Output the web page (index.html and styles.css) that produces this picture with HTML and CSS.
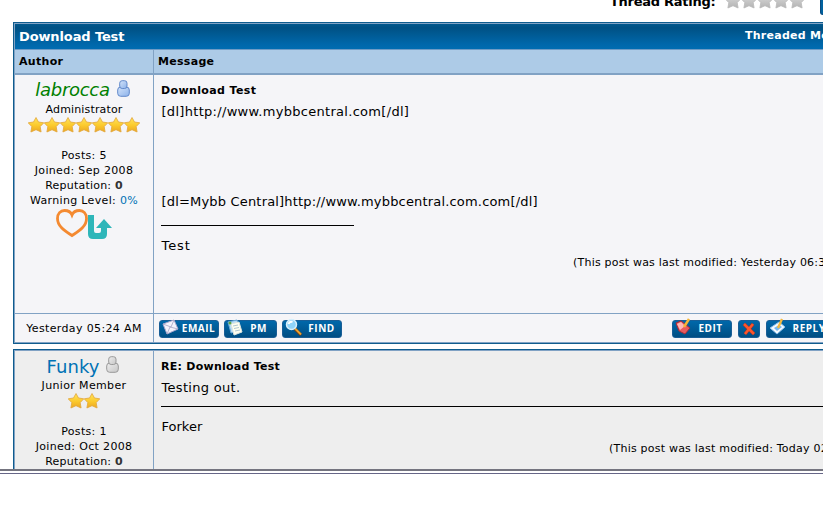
FILE: index.html
```html
<!DOCTYPE html>
<html lang="en">
<head>
<meta charset="utf-8">
<title>Download Test</title>
<link rel="stylesheet" href="styles.css">
</head>
<body>
<svg width="0" height="0" class="defs" aria-hidden="true">
  <defs>
    <linearGradient id="gold" x1="0" y1="0" x2="0" y2="1"><stop offset="0" stop-color="#ffe45c"/><stop offset=".55" stop-color="#fbc92c"/><stop offset="1" stop-color="#eaa722"/></linearGradient>
    <linearGradient id="silver" x1="0" y1="0" x2="0" y2="1"><stop offset="0" stop-color="#dedede"/><stop offset="1" stop-color="#b3b3b3"/></linearGradient>
    <linearGradient id="blue" x1="0" y1="0" x2="1" y2="1"><stop offset="0" stop-color="#d3e3fa"/><stop offset="1" stop-color="#8cb2ea"/></linearGradient>
    <linearGradient id="gray" x1="0" y1="0" x2="1" y2="1"><stop offset="0" stop-color="#eee"/><stop offset="1" stop-color="#c6c6c6"/></linearGradient>
    <symbol id="star" viewBox="0 0 16 16"><path d="M8 .5l2.500 4.500 5.300.8-3.600 3.800.9 5.400L8 12.700l-5.100 2.300.9-5.400L.2 5.800l5.300-.8z" stroke-width=".8" stroke-linejoin="round"/></symbol>
    <symbol id="buddy" viewBox="0 0 13 17"><rect x=".7" y="7" width="11.600" height="9.300" rx="3" stroke-width="1"/><rect x="2.700" y=".7" width="7.300" height="7.800" rx="2.500" stroke-width="1"/></symbol>
  </defs>
</svg>
<div class="page">
  <header class="rating">
    <strong>Thread Rating:</strong>
    <span class="stars off"><svg><use href="#star"/></svg><svg><use href="#star"/></svg><svg><use href="#star"/></svg><svg><use href="#star"/></svg><svg><use href="#star"/></svg></span>
    <span class="corner"></span>
  </header>

  <section class="board first">
    <div class="thead"><strong>Download Test</strong><strong class="mode">Threaded Mode</strong></div>
    <div class="row tcat"><div class="cell"><b>Author</b></div><div class="cell"><b>Message</b></div></div>
    <div class="row post">
      <div class="author">
        <div class="name admin"><em>labrocca</em><svg class="buddy on"><use href="#buddy"/></svg></div>
        <div class="line rank">Administrator</div>
        <div class="stars"><svg><use href="#star"/></svg><svg><use href="#star"/></svg><svg><use href="#star"/></svg><svg><use href="#star"/></svg><svg><use href="#star"/></svg><svg><use href="#star"/></svg><svg><use href="#star"/></svg></div>
        <div class="stats">
          <div class="line">Posts: 5</div><div class="line">Joined: Sep 2008</div><div class="line rep">Reputation: <b>0</b></div><div class="line">Warning Level: <a>0%</a></div>
        </div>
        <div class="awards">
          <svg class="heart" viewBox="0 0 32 29"><path d="M16 26.500C10 22.500 1.500 18 1.500 9.500 1.500 4.500 4.500 1.500 8.500 1.500c4 0 6.500 2 7.500 4.500 1-2.500 3.500-4.500 7.500-4.500 4 0 7 3 7 8C30.500 18 22 22.500 16 26.500z"/></svg>
          <svg class="arrow" viewBox="0 0 24 24"><path d="M0 0h6v16q0 2 2 2h3q2 0 2-2v-3H8l8-9 8 9h-5v6q0 5-5 5H5q-5 0-5-5z"/></svg>
        </div>
      </div>
      <div class="message">
        <b class="subject">Download Test</b>
        <p class="text">[dl]http://www.mybbcentral.com[/dl]</p>
        <p class="text second">[dl=Mybb Central]http://www.mybbcentral.com.com[/dl]</p>
        <div class="rule short"></div>
        <p class="text sig test">Test</p>
        <div class="modified">(This post was last modified: Yesterday 06:33 AM</div>
      </div>
    </div>
    <div class="row actions">
      <div class="date">Yesterday 05:24 AM</div>
      <div class="tools">
        <span class="btn email"><svg viewBox="0 0 18 18"><path d="M2 5l11-4 4 9-11 5z" fill="#f4f2fb" stroke="#a9a6cd"/><path d="M2 5l8 3 3-7M6 15l3-7 8 2" fill="none" stroke="#a5a3c4" stroke-width=".8"/></svg><i>EMAIL</i></span>
        <span class="btn pm"><svg viewBox="0 0 18 18"><path d="M2 3l9-2 3 10-9 3z" fill="#b7dbf6" stroke="#6baad9"/><path d="M5 5l8-2 3 10-8 3z" fill="#fffef0" stroke="#dfe6e0"/><path d="M7 7l5-1M8 9.500l5-1M9 12l5-1" stroke="#9db9c9" stroke-width=".8"/><circle cx="4" cy="4" r="1.500" fill="#5da442"/></svg><i>PM</i></span>
        <span class="btn find"><svg viewBox="0 0 18 18"><path d="M11 10l6 6" stroke="#713c12" stroke-width="3"/><path d="M11 9.500l6 6" stroke="#eaa233" stroke-width="2"/><circle cx="7.500" cy="5.500" r="5" fill="#8fd4f9" stroke="#d5effc" stroke-width="1.500"/><path d="M4.500 5q1-3 4-2" fill="none" stroke="#fff" stroke-width="2"/></svg><i>FIND</i></span>
        <span class="btn edit"><svg viewBox="0 0 18 18"><path d="M2 4l5-2 9 7-5 6-6-3z" fill="#e85b5e" stroke="#a82b37"/><path d="M3 5l4-2 4 4-5 4z" fill="#ffb7b7"/><path d="M10 8l5-8" stroke="#f6b534" stroke-width="2.500"/></svg><i>EDIT</i></span>
        <span class="btn del"><svg viewBox="0 0 12 12"><path d="M1 1l10 10M10 1L2 11" stroke="#98302a" stroke-width="3.500"/><path d="M1 1l10 10M10 1L2 11" stroke="#fb562c" stroke-width="2.500"/></svg></span>
        <span class="btn reply"><svg viewBox="0 0 18 18"><path d="M2 9l9-6 6 5-8 7z" fill="#f4faff" stroke="#88bce9"/><path d="M6 9l5-3 3 2-5 4z" fill="#77b8f2"/><path d="M10 9l4-9" stroke="#f3b93f" stroke-width="2.300"/></svg><i>REPLY</i></span>
      </div>
    </div>
  </section>

  <section class="board next">
    <div class="row post">
      <div class="author">
        <div class="name member"><span>Funky</span><svg class="buddy idle"><use href="#buddy"/></svg></div>
        <div class="line rank junior">Junior Member</div>
        <div class="stars"><svg><use href="#star"/></svg><svg><use href="#star"/></svg></div>
        <div class="stats"><div class="line">Posts: 1</div><div class="line">Joined: Oct 2008</div><div class="line rep">Reputation: <b>0</b></div></div>
      </div>
      <div class="message">
        <b class="subject">RE: Download Test</b>
        <p class="text">Testing out.</p>
        <div class="rule"></div>
        <p class="text sig">Forker</p>
        <div class="modified">(This post was last modified: Today 02:10 AM</div>
      </div>
    </div>
  </section>
</div>
<div class="edge"></div>
</body>
</html>
```

FILE: styles.css
```css
* { box-sizing: border-box; }
body { margin: 0; height: 513px; overflow: hidden; background: #fff; color: #000; font: 11px/15px "DejaVu Sans", Verdana, sans-serif; }
.defs { position: absolute; }
p { margin: 0; }
.page { height: 469px; overflow: hidden; }
.rating { height: 22px; display: flex; align-items: flex-start; padding-left: 610px; overflow: hidden; }
.rating strong { width: 115px; flex: none; font-size: 13px; line-height: 16px; margin-top: -6px; letter-spacing: -.27px; white-space: nowrap; }
.stars { display: flex; justify-content: center; height: 16px; }
.stars svg { width: 16px; height: 16px; flex: none; fill: url(#gold); stroke: #e2a63c; }
.stars.off { margin-top: -7px; }
.stars.off svg { fill: url(#silver); stroke: #b9b9b9; }
.corner { flex: none; width: 20px; height: 15px; margin-left: 15px; background: #00629f; border: 1px solid #084b80; border-top: 0; border-radius: 0 0 0 3px; }
.board { margin-left: 13px; width: 900px; border: 1px solid #0f5c8e; }
.first { height: 322px; }
.next { margin-top: 5px; height: 200px; }
.thead { height: 27px; display: flex; color: #fff; border-top: 1px solid #81a2c4; border-left: 1px solid #81a2c4; border-bottom: 1px solid #6f9bc5; background: linear-gradient(#02588d, #005184 15%, #0067aa 80%, #006cb1); line-height: 25px; padding-left: 4px; white-space: nowrap; }
.thead strong { width: 726px; font-size: 13px; letter-spacing: -.12px; }
.thead .mode { width: auto; font-size: 11px; letter-spacing: .25px; line-height: 24px; }
.row { display: grid; grid-template-columns: 138px 1fr; border-left: 1px solid #81a2c4; }
.row > * + * { border-left: 1px solid #81a2c4; }
.tcat { height: 25px; background: #adcbe7; border-bottom: 2px solid #81a2c4; line-height: 24px; letter-spacing: .3px; }
.cell { padding-left: 4px; }
.post { height: 238px; background: #f5f5f8; }
.author { text-align: center; }
.name { height: 27px; padding: 4px 3px 0 0; display: flex; justify-content: center; font-size: 18px; line-height: 22px; }
.name em { color: #008000; letter-spacing: -.3px; }
.name span { color: #0072b5; letter-spacing: .1px; }
.buddy { width: 13px; height: 17px; margin: 1px 0 0 7px; }
.member { line-height: 23px; }
.member .buddy { margin: 1px 0 0 6px; }
.on { fill: url(#blue); stroke: #6289ca; }
.idle { fill: url(#gray); stroke: #999; }
.line { height: 15px; white-space: nowrap; letter-spacing: .33px; }
.line.rank { letter-spacing: .15px; }
.line.rep { letter-spacing: .22px; }
.line.junior { letter-spacing: .35px; }
.stats { padding-top: 15px; }
.stats b { color: #333; }
.stats a { color: #0072b5; }
.awards { display: flex; justify-content: center; height: 35px; }
.heart { width: 32px; height: 29px; margin-top: 1px; fill: none; stroke: #f48a31; stroke-width: 2.8; }
.arrow { width: 24px; height: 24px; margin-top: 7px; fill: #2eb6b9; }
.message { padding: 8px 0 0 7px; white-space: nowrap; }
.subject { display: block; height: 15px; letter-spacing: .38px; }
.next .subject { letter-spacing: .26px; }
.text { font-size: 13px; line-height: 18px; margin-top: 5px; height: 18px; padding-left: .5px; letter-spacing: .3px; }
.second { margin-top: 72px; letter-spacing: .18px; }
.rule { height: 1px; background: #000; margin-top: 9px; }
.short { width: 193px; margin-top: 14px; }
.sig { margin-top: 11px; letter-spacing: 0; }
.test { letter-spacing: .9px; }
.modified { width: 696px; padding-left: 412px; letter-spacing: .22px; }
.actions { height: 30px; background: #f5f5f8; border-top: 1px solid #81a2c4; border-bottom: 1px solid #81a2c4; }
.date { text-align: center; line-height: 29px; letter-spacing: .36px; }
.tools { display: flex; padding: 6px 0 0 5px; }
.btn { flex: none; height: 18px; display: flex; align-items: flex-start; background: linear-gradient(#0068aa, #004e83); border: 1px solid #195e96; border-radius: 3px; color: #fff; }
.btn svg { width: 18px; height: 18px; margin: -2px 0 0 1px; flex: none; overflow: visible; fill: none; }
.btn i { flex: 1; text-align: center; font: bold 10px/15px "Open Sans", sans-serif; letter-spacing: .5px; }
.email { width: 60px; }
.pm { width: 53px; margin-left: 5px; }
.pm i { padding-right: 3px; }
.find { width: 60px; margin-left: 5px; }
.edit { width: 60px; margin-left: 330px; }
.edit i { padding-right: 2px; }
.del { width: 22px; margin-left: 6px; }
.del svg { width: 12px; height: 12px; margin: 2px 0 0 4px; }
.reply { width: 67px; margin-left: 6px; }
.next .post { border-top: 1px solid #81a2c4; background: #eee; }
.next .modified { padding-left: 448px; margin-top: 5px; }
.edge { height: 5px; border-top: 2px solid #74747f; border-bottom: 1px solid #666687; }
```
